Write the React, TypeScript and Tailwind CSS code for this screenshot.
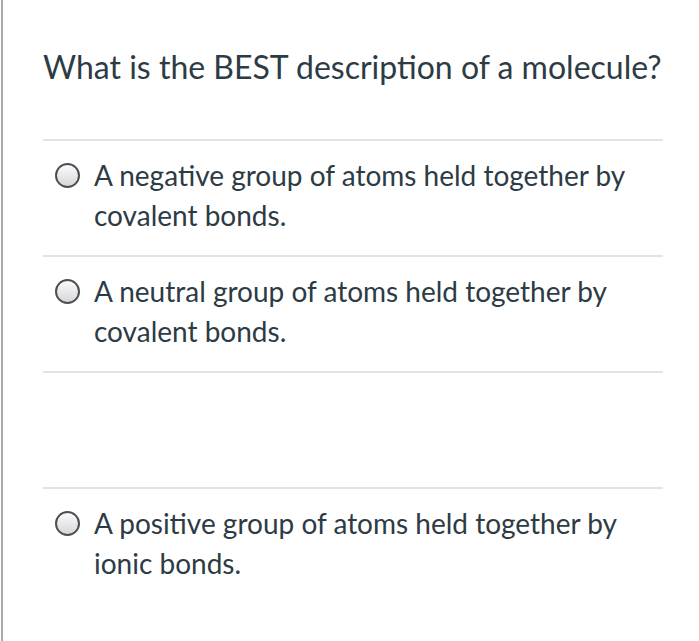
import React from "react";

const OPTIONS: (string[] | null)[] = [
  ["A negative group of atoms held together by", "covalent bonds."],
  ["A neutral group of atoms held together by", "covalent bonds."],
  null,
  ["A positive group of atoms held together by", "ionic bonds."],
];

function Radio() {
  return (
    <span className="mt-[8px] block h-[25px] w-[25px] shrink-0 rounded-full border-2 border-[#4a4f55] bg-gradient-to-b from-[#fafafa] to-[#d8d8d8]" />
  );
}

export default function App() {
  return (
    <div
      className="h-[641px] w-[699px] bg-white text-[#2d3b45]"
      style={{ fontFamily: "Lato, 'Open Sans', sans-serif" }}
    >
      <div className="ml-px flex h-full flex-col border-l-2 border-[#a9a9a9] pl-[40px] pr-[36px]">
        <h1 className="pt-[48px] pb-[53px] text-[32px] font-normal leading-[38px] whitespace-nowrap">
          What is the BEST description of a molecule?
        </h1>
        {OPTIONS.map((opt, i) => (
          <div
            key={i}
            className="h-[116px] border-t-2 border-[#e2e2e2] pt-[14px] pl-[12px]"
          >
            {opt && (
              <label className="flex gap-[14px]">
                <Radio />
                <span className="text-[28px] leading-[40px]">
                  {opt[0]}
                  <br />
                  {opt[1]}
                </span>
              </label>
            )}
          </div>
        ))}
      </div>
    </div>
  );
}
